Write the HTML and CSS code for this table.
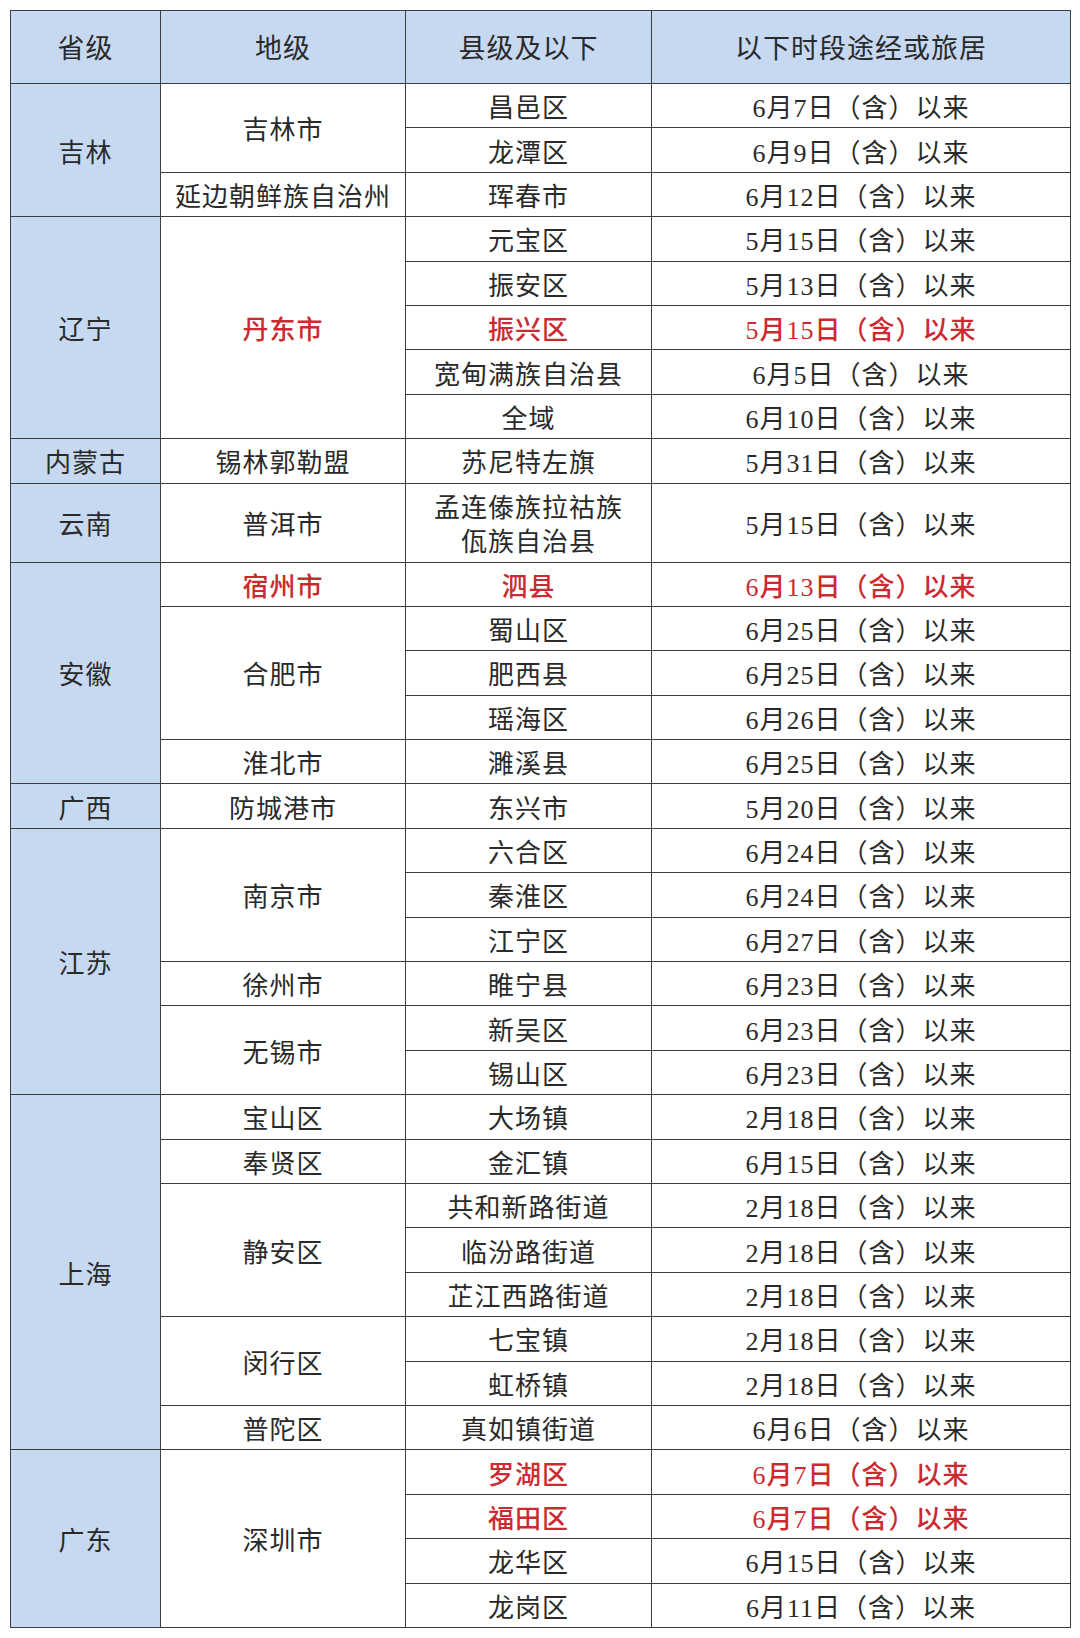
FILE: index.html
```html
<!DOCTYPE html>
<html lang="zh-CN">
<head>
<meta charset="utf-8">
<link rel="stylesheet" href="styles.css">
</head>
<body>
<table class="risk">
<colgroup><col class="c1"><col class="c2"><col class="c3"><col class="c4"></colgroup>
<thead>
<tr class="head"><th>省级</th><th>地级</th><th>县级及以下</th><th>以下时段途经或旅居</th></tr>
</thead>
<tbody>
<tr><td class="prov" rowspan="3">吉林</td><td rowspan="2">吉林市</td><td>昌邑区</td><td>6月7日（含）以来</td></tr>
<tr><td>龙潭区</td><td>6月9日（含）以来</td></tr>
<tr><td>延边朝鲜族自治州</td><td>珲春市</td><td>6月12日（含）以来</td></tr>

<tr><td class="prov" rowspan="5">辽宁</td><td class="red" rowspan="5">丹东市</td><td>元宝区</td><td>5月15日（含）以来</td></tr>
<tr><td>振安区</td><td>5月13日（含）以来</td></tr>
<tr><td class="red">振兴区</td><td class="red">5月15日（含）以来</td></tr>
<tr><td>宽甸满族自治县</td><td>6月5日（含）以来</td></tr>
<tr><td>全域</td><td>6月10日（含）以来</td></tr>

<tr><td class="prov">内蒙古</td><td>锡林郭勒盟</td><td>苏尼特左旗</td><td>5月31日（含）以来</td></tr>

<tr class="double"><td class="prov">云南</td><td>普洱市</td><td>孟连傣族拉祜族<br>佤族自治县</td><td>5月15日（含）以来</td></tr>

<tr><td class="prov" rowspan="5">安徽</td><td class="red">宿州市</td><td class="red">泗县</td><td class="red">6月13日（含）以来</td></tr>
<tr><td rowspan="3">合肥市</td><td>蜀山区</td><td>6月25日（含）以来</td></tr>
<tr><td>肥西县</td><td>6月25日（含）以来</td></tr>
<tr><td>瑶海区</td><td>6月26日（含）以来</td></tr>
<tr><td>淮北市</td><td>濉溪县</td><td>6月25日（含）以来</td></tr>

<tr><td class="prov">广西</td><td>防城港市</td><td>东兴市</td><td>5月20日（含）以来</td></tr>

<tr><td class="prov" rowspan="6">江苏</td><td rowspan="3">南京市</td><td>六合区</td><td>6月24日（含）以来</td></tr>
<tr><td>秦淮区</td><td>6月24日（含）以来</td></tr>
<tr><td>江宁区</td><td>6月27日（含）以来</td></tr>
<tr><td>徐州市</td><td>睢宁县</td><td>6月23日（含）以来</td></tr>
<tr><td rowspan="2">无锡市</td><td>新吴区</td><td>6月23日（含）以来</td></tr>
<tr><td>锡山区</td><td>6月23日（含）以来</td></tr>

<tr><td class="prov" rowspan="8">上海</td><td>宝山区</td><td>大场镇</td><td>2月18日（含）以来</td></tr>
<tr><td>奉贤区</td><td>金汇镇</td><td>6月15日（含）以来</td></tr>
<tr><td rowspan="3">静安区</td><td>共和新路街道</td><td>2月18日（含）以来</td></tr>
<tr><td>临汾路街道</td><td>2月18日（含）以来</td></tr>
<tr><td>芷江西路街道</td><td>2月18日（含）以来</td></tr>
<tr><td rowspan="2">闵行区</td><td>七宝镇</td><td>2月18日（含）以来</td></tr>
<tr><td>虹桥镇</td><td>2月18日（含）以来</td></tr>
<tr><td>普陀区</td><td>真如镇街道</td><td>6月6日（含）以来</td></tr>

<tr><td class="prov" rowspan="4">广东</td><td rowspan="4">深圳市</td><td class="red">罗湖区</td><td class="red">6月7日（含）以来</td></tr>
<tr><td class="red">福田区</td><td class="red">6月7日（含）以来</td></tr>
<tr><td>龙华区</td><td>6月15日（含）以来</td></tr>
<tr><td>龙岗区</td><td>6月11日（含）以来</td></tr>
</tbody>
</table>
</body>
</html>
```
FILE: styles.css
```css
html, body {
  margin: 0;
  padding: 0;
  background: #ffffff;
}
body {
  padding: 10px;
}
.risk {
  border-collapse: collapse;
  table-layout: fixed;
  width: 1060px;
  font-family: "Liberation Serif", "Noto Sans CJK SC", serif;
  color: #2a2a2a;
}
.c1 { width: 150px; }
.c2 { width: 245px; }
.c3 { width: 246px; }
.c4 { width: 419px; }
.risk th,
.risk td {
  border: 1.5px solid #3b3d42;
  text-align: center;
  vertical-align: middle;
  padding: 7px 0 0;
  font-size: 26px;
  letter-spacing: 1px;
  line-height: 34px;
  font-weight: 400;
}
.risk th {
  background: #c6d9f0;
  font-size: 27px;
  padding-top: 4px;
}
.head {
  height: 73px;
}
.risk tbody tr {
  height: 44.4px;
}
.risk tbody tr.double {
  height: 79px;
}
.risk td.prov {
  background: #c6d9f0;
}
.risk td.red {
  color: #cc2a30;
  font-weight: 500;
}
```
